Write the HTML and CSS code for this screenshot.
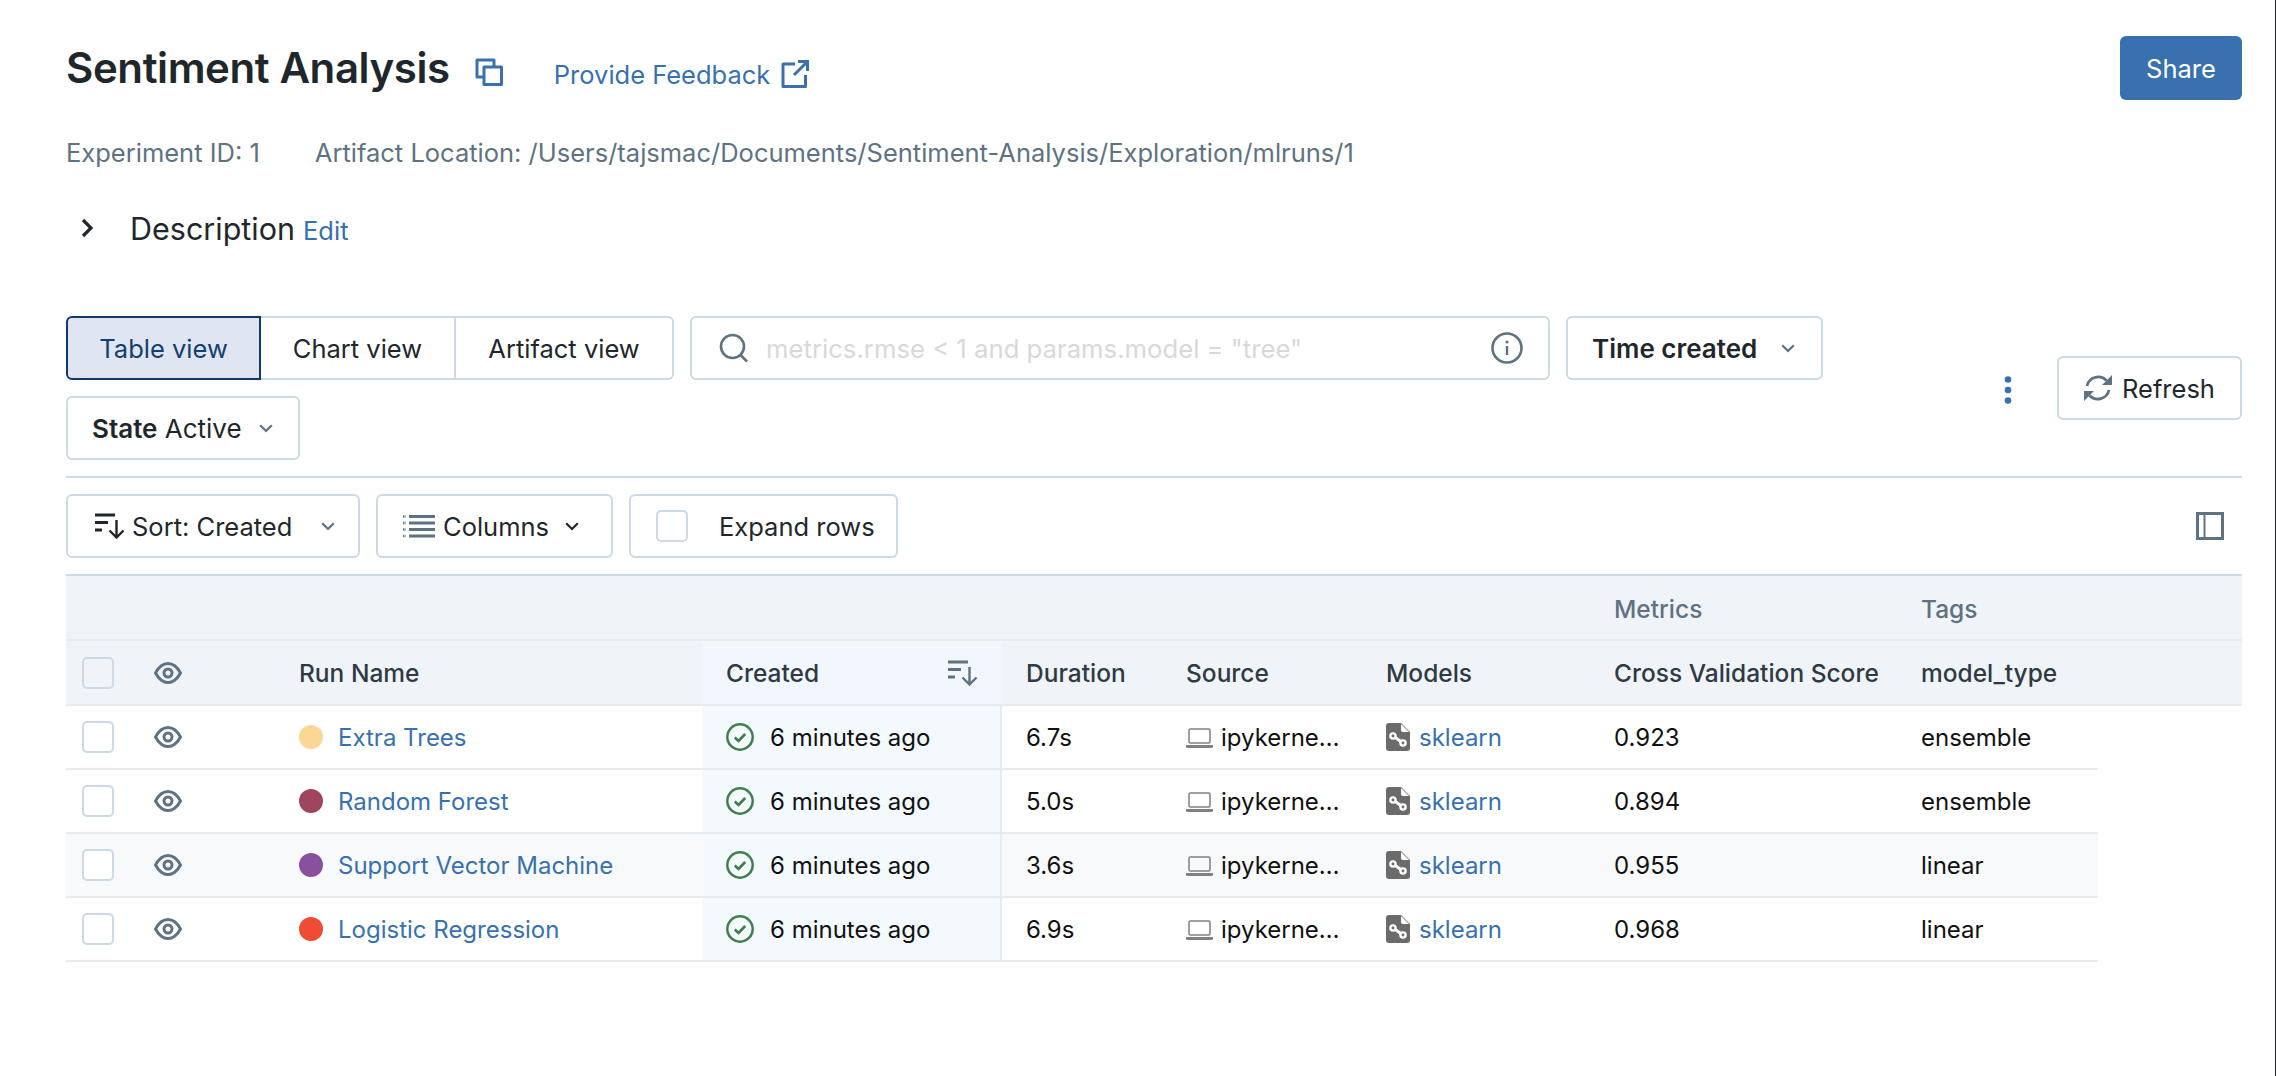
FILE: index.html
```html
<!DOCTYPE html>
<html lang="en">
<head>
  <meta charset="UTF-8" />
  <title>Sentiment Analysis</title>
  <link rel="stylesheet" href="styles.css">
</head>
<body>
  <svg class="icon-defs">
    <symbol id="i-eye" viewBox="0 0 28 22"><path d="M1.500 11C5 4.500 9 1.500 14 1.500S23 4.500 26.500 11C23 17.500 19 20.500 14 20.500S5 17.500 1.500 11Z" fill="none" stroke="currentColor" stroke-width="3"/><circle cx="14" cy="11" r="4" fill="none" stroke="currentColor" stroke-width="3"/></symbol>
    <symbol id="i-check" viewBox="0 0 28 28"><circle cx="14" cy="14" r="12.700" fill="none" stroke="currentColor" stroke-width="2.500"/><path d="M8.800 14.500l3.700 3.500 6.700-7" fill="none" stroke="currentColor" stroke-width="2.600"/></symbol>
    <symbol id="i-laptop" viewBox="0 0 27 22"><rect x="3" y="3" width="21" height="14" rx="1.500" fill="none" stroke="currentColor" stroke-width="1.500"/><path d="M0 19h27v1.500a1.500 1.500 0 0 1-1.500 1.500h-24A1.500 1.500 0 0 1 0 20.500Z" fill="currentColor"/></symbol>
    <symbol id="i-model" viewBox="0 0 24 28"><path d="M3 0h12l9 9v16a3 3 0 0 1-3 3H3a3 3 0 0 1-3-3V3a3 3 0 0 1 3-3Z" fill="currentColor"/><path d="M15 1l8 8h-6a2 2 0 0 1-2-2Z" fill="#fff"/><path d="M7 13l10 7" stroke="#fff" stroke-width="3"/><circle cx="7" cy="13" r="3.800" fill="#fff"/><circle cx="7" cy="13" r="1.400" fill="currentColor"/><circle cx="17" cy="20" r="3.800" fill="#fff"/><circle cx="17" cy="20" r="1.400" fill="currentColor"/></symbol>
    <symbol id="i-sort" viewBox="0 0 30 26"><path d="M0 2h20M0 9.500h13M0 17h7" fill="none" stroke="currentColor" stroke-width="3"/><path d="M21.500 7v17M14.500 17.500l7 7 7-7" fill="none" stroke="currentColor" stroke-width="2.400"/></symbol>
    <symbol id="i-chevron" viewBox="0 0 14 9"><path d="M1.200 1.200L7 7l5.800-5.800" fill="none" stroke="currentColor" stroke-width="2.200"/></symbol>
  </svg>

  <div class="page">
    <header class="title-row">
      <div class="title-left">
        <h1>Sentiment Analysis</h1>
        <svg class="icon-copy" viewBox="0 0 28 28"><path d="M9 19H2V2h17v7" fill="none" stroke="currentColor" stroke-width="3" stroke-linejoin="round"/><rect x="9" y="9" width="17.500" height="17.500" fill="none" stroke="currentColor" stroke-width="3" stroke-linejoin="round"/></svg>
        <a class="link feedback">Provide Feedback
          <svg class="icon-ext" viewBox="0 0 28 28"><path d="M14 4H2v22.500h22.500V15" fill="none" stroke="currentColor" stroke-width="3" stroke-linejoin="round"/><path d="M13 15L26 2M17 1.500h9.500V11" fill="none" stroke="currentColor" stroke-width="3"/></svg>
        </a>
      </div>
      <button class="share">Share</button>
    </header>

    <div class="meta">
      <span>Experiment ID: 1</span>
      <span>Artifact Location: /Users/tajsmac/Documents/Sentiment-Analysis/Exploration/mlruns/1</span>
    </div>

    <div class="description">
      <svg class="icon-caret" viewBox="0 0 13 20"><path d="M2 2l8 8-8 8" fill="none" stroke="currentColor" stroke-width="3.200"/></svg>
      <span class="desc-label">Description</span>
      <a class="link edit">Edit</a>
    </div>

    <section class="controls">
      <div class="controls-left">
        <div class="view-switch">
          <button class="seg selected">Table view</button>
          <button class="seg chart">Chart view</button>
          <button class="seg artifact">Artifact view</button>
        </div>
        <div class="search">
          <svg class="icon-search" viewBox="0 0 30 30"><circle cx="13.500" cy="13.500" r="11.500" fill="none" stroke="currentColor" stroke-width="2.600"/><path d="M21.500 22l6.500 6.500" stroke="currentColor" stroke-width="2.600"/></svg>
          <span class="placeholder">metrics.rmse &lt; 1 and params.model = "tree"</span>
          <svg class="icon-info" viewBox="0 0 32 32"><circle cx="16" cy="16" r="14.500" fill="none" stroke="currentColor" stroke-width="2.600"/><circle cx="16" cy="10" r="1.600" fill="currentColor"/><path d="M16 14v9" stroke="currentColor" stroke-width="2.400"/></svg>
        </div>
        <button class="btn time"><b>Time created</b><svg class="chevron grey"><use href="#i-chevron"/></svg></button>
        <button class="btn state"><span><b>State</b> Active</span><svg class="chevron grey"><use href="#i-chevron"/></svg></button>
      </div>
      <div class="controls-right">
        <svg class="icon-dots" viewBox="0 0 8 28"><circle cx="4" cy="3.500" r="3.300"/><circle cx="4" cy="14" r="3.300"/><circle cx="4" cy="24.500" r="3.300"/></svg>
        <button class="btn refresh">
          <svg class="icon-refresh" viewBox="0 0 28 28"><path d="M3 12A11.500 11.500 0 0 1 22.500 6.500M25 16A11.500 11.500 0 0 1 5.500 21.500" fill="none" stroke="currentColor" stroke-width="2.800"/><path d="M28 1v10H18ZM0 27V17h10Z" fill="currentColor"/></svg>
          Refresh
        </button>
      </div>
    </section>

    <section class="table-bar">
      <button class="btn sort"><svg class="icon-sort"><use href="#i-sort"/></svg><span>Sort: Created</span><svg class="chevron grey"><use href="#i-chevron"/></svg></button>
      <button class="btn columns">
        <svg class="icon-columns" viewBox="0 0 32 24"><path d="M6 2.500h26M6 9h26M6 15.500h26M6 22h26" stroke="currentColor" stroke-width="3"/><path d="M0 2.500h3M0 9h3M0 15.500h3M0 22h3" stroke="currentColor" stroke-width="2.400" stroke-dasharray="1.500 1"/></svg>
        <span>Columns</span><svg class="chevron dark"><use href="#i-chevron"/></svg>
      </button>
      <button class="btn expand"><span class="box"></span><span>Expand rows</span></button>
      <svg class="icon-panel" viewBox="0 0 28 28"><rect x="1.500" y="1.500" width="25" height="25" fill="none" stroke="currentColor" stroke-width="3"/><path d="M8.500 2v24" stroke="currentColor" stroke-width="2"/></svg>
    </section>

    <div class="runs">
      <div class="head-group">
        <span class="group-metrics">Metrics</span>
        <span class="group-tags">Tags</span>
      </div>
      <div class="row head">
        <div class="cell c-check"><span class="box"></span></div>
        <div class="cell c-eye"><svg class="icon-eye"><use href="#i-eye"/></svg></div>
        <div class="cell c-name">Run Name</div>
        <div class="cell c-created">Created<svg class="icon-sort-head"><use href="#i-sort"/></svg></div>
        <div class="cell">Duration</div>
        <div class="cell">Source</div>
        <div class="cell">Models</div>
        <div class="cell">Cross Validation Score</div>
        <div class="cell">model_type</div>
      </div>

      <div class="row">
        <div class="cell c-check"><span class="box"></span></div>
        <div class="cell c-eye"><svg class="icon-eye"><use href="#i-eye"/></svg></div>
        <div class="cell c-name"><span class="dot dot-yellow"></span><a class="link">Extra Trees</a></div>
        <div class="cell c-created"><svg class="icon-check"><use href="#i-check"/></svg>6 minutes ago</div>
        <div class="cell">6.7s</div>
        <div class="cell"><svg class="icon-laptop"><use href="#i-laptop"/></svg>ipykerne…</div>
        <div class="cell"><svg class="icon-model"><use href="#i-model"/></svg><a class="link">sklearn</a></div>
        <div class="cell">0.923</div>
        <div class="cell">ensemble</div>
      </div>

      <div class="row">
        <div class="cell c-check"><span class="box"></span></div>
        <div class="cell c-eye"><svg class="icon-eye"><use href="#i-eye"/></svg></div>
        <div class="cell c-name"><span class="dot dot-maroon"></span><a class="link">Random Forest</a></div>
        <div class="cell c-created"><svg class="icon-check"><use href="#i-check"/></svg>6 minutes ago</div>
        <div class="cell">5.0s</div>
        <div class="cell"><svg class="icon-laptop"><use href="#i-laptop"/></svg>ipykerne…</div>
        <div class="cell"><svg class="icon-model"><use href="#i-model"/></svg><a class="link">sklearn</a></div>
        <div class="cell">0.894</div>
        <div class="cell">ensemble</div>
      </div>

      <div class="row shaded">
        <div class="cell c-check"><span class="box"></span></div>
        <div class="cell c-eye"><svg class="icon-eye"><use href="#i-eye"/></svg></div>
        <div class="cell c-name"><span class="dot dot-purple"></span><a class="link">Support Vector Machine</a></div>
        <div class="cell c-created"><svg class="icon-check"><use href="#i-check"/></svg>6 minutes ago</div>
        <div class="cell">3.6s</div>
        <div class="cell"><svg class="icon-laptop"><use href="#i-laptop"/></svg>ipykerne…</div>
        <div class="cell"><svg class="icon-model"><use href="#i-model"/></svg><a class="link">sklearn</a></div>
        <div class="cell">0.955</div>
        <div class="cell">linear</div>
      </div>

      <div class="row">
        <div class="cell c-check"><span class="box"></span></div>
        <div class="cell c-eye"><svg class="icon-eye"><use href="#i-eye"/></svg></div>
        <div class="cell c-name"><span class="dot dot-red"></span><a class="link">Logistic Regression</a></div>
        <div class="cell c-created"><svg class="icon-check"><use href="#i-check"/></svg>6 minutes ago</div>
        <div class="cell">6.9s</div>
        <div class="cell"><svg class="icon-laptop"><use href="#i-laptop"/></svg>ipykerne…</div>
        <div class="cell"><svg class="icon-model"><use href="#i-model"/></svg><a class="link">sklearn</a></div>
        <div class="cell">0.968</div>
        <div class="cell">linear</div>
      </div>
    </div>
  </div>
</body>
</html>
```

FILE: styles.css
```css
:root {
  --blue: #3871ae;
  --text: #1f272d;
  --grey: #5f7281;
  --line: #cdd9e5;
  --row-line: #e6ebf0;
}

html, body {
  margin: 0;
  padding: 0;
  height: 100%;
  background: #fff;
  color: var(--text);
  font-family: Inter, "Liberation Sans", sans-serif;
  font-size: 25.5px;
  overflow: hidden;
}

.icon-defs {
  display: none;
}

.page {
  box-sizing: border-box;
  height: 1076px;
  padding: 36px 33px 0 66px;
  border-right: 1px solid #20262c;
}

button {
  font: inherit;
  color: inherit;
  background: #fff;
  cursor: pointer;
}

.link {
  color: var(--blue);
  text-decoration: none;
}

/* title */
.title-row {
  display: flex;
  justify-content: space-between;
  align-items: flex-start;
  height: 64px;
}
.title-left {
  display: flex;
  align-items: center;
  height: 64px;
}
h1 {
  margin: 0;
  font-size: 42px;
  font-weight: 600;
  letter-spacing: -0.4px;
  position: relative;
  top: -1px;
}
.icon-copy {
  width: 28px;
  height: 28px;
  margin-left: 25px;
  position: relative;
  top: 4px;
  color: var(--blue);
}
.feedback {
  display: flex;
  align-items: center;
  margin-left: 51px;
  gap: 11px;
  position: relative;
  top: 6px;
}
.icon-ext {
  width: 28px;
  height: 28px;
}
.share {
  width: 122px;
  height: 64px;
  border: none;
  border-radius: 6px;
  background: var(--blue);
  color: #fff;
}

/* experiment info */
.meta {
  display: flex;
  gap: 55px;
  margin-top: 38px;
  height: 30px;
  line-height: 30px;
  color: var(--grey);
}

.description {
  display: flex;
  align-items: center;
  margin-top: 40px;
  height: 40px;
}
.icon-caret {
  width: 13px;
  height: 20px;
  margin-left: 15px;
}
.desc-label {
  margin-left: 36px;
  font-size: 30.5px;
}
.edit {
  margin-left: 8px;
  position: relative;
  top: 2px;
}

/* toolbar */
.btn {
  display: flex;
  align-items: center;
  box-sizing: border-box;
  height: 64px;
  padding: 0;
  border: 2px solid var(--line);
  border-radius: 6px;
}
.controls {
  display: flex;
  justify-content: space-between;
  margin-top: 68px;
  padding-bottom: 16px;
  border-bottom: 2px solid var(--line);
}
.controls-left {
  display: flex;
  flex-wrap: wrap;
  gap: 16px;
  width: 1780px;
}
.view-switch {
  display: flex;
}
.seg {
  box-sizing: border-box;
  height: 64px;
  border: 2px solid var(--line);
  border-left: none;
  padding: 0;
}
.seg.selected {
  width: 195px;
  border: 2px solid #0f3a66;
  border-radius: 6px 0 0 6px;
  background: #dfe6f1;
  color: #14406f;
}
.seg.chart {
  width: 195px;
}
.seg.artifact {
  width: 218px;
  border-radius: 0 6px 6px 0;
}
.search {
  display: flex;
  align-items: center;
  box-sizing: border-box;
  width: 860px;
  height: 64px;
  padding: 0 25px 0 27px;
  border: 2px solid var(--line);
  border-radius: 6px;
}
.icon-search {
  width: 30px;
  height: 30px;
  color: var(--grey);
}
.placeholder {
  flex: 1;
  margin-left: 17px;
  font-size: 25.7px;
  color: #d6d9dc;
}
.icon-info {
  width: 32px;
  height: 32px;
  color: var(--grey);
}
.time {
  width: 257px;
  padding-left: 24px;
  font-size: 26px;
}
.state {
  width: 234px;
  padding-left: 24px;
  font-size: 26px;
}
.chevron {
  width: 14px;
  height: 9px;
}
.chevron.grey {
  color: var(--grey);
}
.time .chevron {
  margin-left: 24px;
}
.state .chevron {
  margin-left: 17px;
}
b {
  font-weight: 600;
}
.controls-right {
  display: flex;
  align-items: flex-start;
  padding-top: 40px;
}
.icon-dots {
  width: 8px;
  height: 28px;
  margin-top: 20px;
  fill: var(--blue);
}
.refresh {
  width: 185px;
  margin-left: 45px;
  padding-left: 25px;
  gap: 10px;
}
.icon-refresh {
  width: 28px;
  height: 28px;
  color: var(--grey);
}

.table-bar {
  display: flex;
  align-items: center;
  gap: 16px;
  margin-top: 16px;
}
.sort {
  width: 294px;
  padding-left: 27px;
}
.icon-sort {
  width: 30px;
  height: 26px;
  flex: none;
}
.sort span {
  margin-left: 7px;
}
.sort .chevron {
  margin-left: 29px;
}
.columns {
  width: 237px;
  padding-left: 25px;
}
.icon-columns {
  width: 32px;
  height: 24px;
  color: var(--grey);
}
.columns span {
  margin-left: 8px;
}
.columns .chevron {
  margin-left: 16px;
}
.box {
  display: block;
  box-sizing: border-box;
  width: 32px;
  height: 32px;
  border: 2px solid var(--line);
  border-radius: 5px;
  background: #fff;
}
.expand {
  width: 269px;
  padding-left: 25px;
}
.expand span:last-child {
  margin-left: 31px;
}
.icon-panel {
  width: 28px;
  height: 28px;
  margin-left: auto;
  margin-right: 18px;
  color: var(--grey);
}

/* runs table */
.runs {
  margin-top: 16px;
  border-top: 2px solid var(--line);
  font-size: 24px;
}
.head-group {
  display: grid;
  grid-template-columns: 1524px 307px 1fr;
  height: 65px;
  box-sizing: border-box;
  align-items: center;
  background: #f0f4f8;
  border-bottom: 2px solid var(--row-line);
  color: var(--grey);
  font-size: 24.5px;
  font-weight: 500;
  padding-top: 2px;
}
.group-metrics {
  grid-column: 2;
  padding-left: 24px;
}
.group-tags {
  padding-left: 24px;
}
.row {
  display: grid;
  grid-template-columns: 88px 145px 403px 300px 160px 200px 228px 307px 201px;
  box-sizing: border-box;
  width: 2032px;
  height: 64px;
  border-bottom: 2px solid var(--row-line);
  color: #111;
}
.row.shaded {
  background: #f8f9fa;
}
.row.head {
  width: auto;
  height: 65px;
  grid-template-columns: 88px 145px 403px 300px 160px 200px 228px 307px 1fr;
  background: #f0f4f8;
  color: #2f3a44;
  font-size: 24.5px;
  font-weight: 500;
}
.cell {
  display: flex;
  align-items: center;
  padding-left: 24px;
  white-space: nowrap;
}
.c-check {
  padding-left: 16px;
}
.c-eye {
  padding-left: 0;
}
.c-name {
  padding-left: 0;
}
.row.head .c-check .box {
  background: #f0f4f8;
}
.icon-eye {
  width: 28px;
  height: 22px;
  color: var(--grey);
}
.dot {
  width: 24px;
  height: 24px;
  margin-right: 15px;
  border-radius: 50%;
}
.dot-yellow { background: #fbd795; }
.dot-maroon { background: #a0465a; }
.dot-purple { background: #89509e; }
.dot-red { background: #f04b33; }
.c-created {
  background: #f4f9fe;
  border-right: 2px solid var(--row-line);
}
.row.head .c-created {
  justify-content: space-between;
  padding-right: 24px;
  background: #f2f6fd;
  border-right: none;
}
.icon-sort-head {
  width: 30px;
  height: 26px;
  color: var(--grey);
}
.icon-check {
  width: 28px;
  height: 28px;
  margin-right: 16px;
  color: #3f7f4d;
}
.icon-laptop {
  width: 27px;
  height: 22px;
  margin-right: 8px;
  color: #808080;
}
.icon-model {
  width: 24px;
  height: 28px;
  margin-right: 9px;
  color: #6b6b6b;
}
```
